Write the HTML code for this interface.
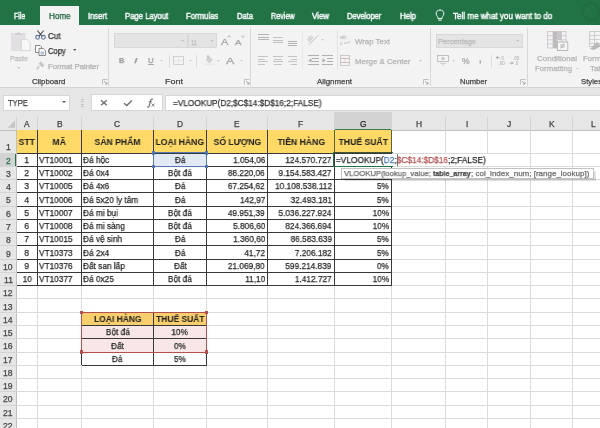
<!DOCTYPE html><html><head><meta charset="utf-8"><style>
*{margin:0;padding:0;box-sizing:border-box}
html,body{width:600px;height:428px;overflow:hidden;background:#fff;font-family:"Liberation Sans", sans-serif}
#root{position:relative;width:600px;height:428px;overflow:hidden}
.a{position:absolute}
.t{position:absolute;white-space:nowrap;line-height:1;will-change:transform;-webkit-text-stroke:0.25px currentColor}
</style></head><body><div id="root">
<div class="a" style="left:0;top:0;width:600px;height:25.3px;background:#217346"></div>
<svg class="a" style="left:575px;top:0" width="25" height="25"><circle cx="15.8" cy="11.7" r="8.5" fill="none" stroke="#1f6c42" stroke-width="2"/><path d="M12 8 L18 15 M12 8 V15" fill="none" stroke="#26764a" stroke-width="1.4"/></svg>
<div class="a" style="left:40.1px;top:5.8px;width:38.6px;height:20px;background:#f3f3f3"></div>
<div class="t" style="left:13.80px;top:13.00px;font-size:8.2px;color:#fff;font-weight:normal;letter-spacing:0px;transform:scaleX(0.8476);transform-origin:left;-webkit-text-stroke:0.4px #fff;">File</div>
<div class="t" style="left:48.50px;top:13.00px;font-size:8.2px;color:#1b603a;font-weight:normal;letter-spacing:0px;transform:scaleX(0.9829);transform-origin:left;">Home</div>
<div class="t" style="left:88.30px;top:13.00px;font-size:8.2px;color:#fff;font-weight:normal;letter-spacing:0px;transform:scaleX(0.9265);transform-origin:left;-webkit-text-stroke:0.4px #fff;">Insert</div>
<div class="t" style="left:125.00px;top:13.00px;font-size:8.2px;color:#fff;font-weight:normal;letter-spacing:0px;transform:scaleX(0.9403);transform-origin:left;-webkit-text-stroke:0.4px #fff;">Page Layout</div>
<div class="t" style="left:186.00px;top:13.00px;font-size:8.2px;color:#fff;font-weight:normal;letter-spacing:0px;transform:scaleX(0.9451);transform-origin:left;-webkit-text-stroke:0.4px #fff;">Formulas</div>
<div class="t" style="left:236.70px;top:13.00px;font-size:8.2px;color:#fff;font-weight:normal;letter-spacing:0px;transform:scaleX(0.9237);transform-origin:left;-webkit-text-stroke:0.4px #fff;">Data</div>
<div class="t" style="left:270.70px;top:13.00px;font-size:8.2px;color:#fff;font-weight:normal;letter-spacing:0px;transform:scaleX(0.8777);transform-origin:left;-webkit-text-stroke:0.4px #fff;">Review</div>
<div class="t" style="left:312.30px;top:13.00px;font-size:8.2px;color:#fff;font-weight:normal;letter-spacing:0px;transform:scaleX(0.9645);transform-origin:left;-webkit-text-stroke:0.4px #fff;">View</div>
<div class="t" style="left:347.30px;top:13.00px;font-size:8.2px;color:#fff;font-weight:normal;letter-spacing:0px;transform:scaleX(0.9203);transform-origin:left;-webkit-text-stroke:0.4px #fff;">Developer</div>
<div class="t" style="left:400.00px;top:13.00px;font-size:8.2px;color:#fff;font-weight:normal;letter-spacing:0px;transform:scaleX(0.9487);transform-origin:left;-webkit-text-stroke:0.4px #fff;">Help</div>
<div class="t" style="left:453.00px;top:13.00px;font-size:8.2px;color:#fff;font-weight:normal;letter-spacing:0px;transform:scaleX(0.9823);transform-origin:left;-webkit-text-stroke:0.4px #fff;">Tell me what you want to do</div>
<svg class="a" style="left:435px;top:8.5px" width="10" height="13"><path d="M5 1 C2.6 1 1.2 2.8 1.2 4.7 C1.2 6.3 2.4 7.1 2.9 8.4 L2.9 9.6 L7.1 9.6 L7.1 8.4 C7.6 7.1 8.8 6.3 8.8 4.7 C8.8 2.8 7.4 1 5 1 Z M3.4 11.2 L6.6 11.2" fill="none" stroke="#fff" stroke-width="1"/></svg>
<div class="a" style="left:0;top:25.3px;width:600px;height:62px;background:#f3f3f3"></div>
<div class="a" style="left:0;top:87.3px;width:600px;height:1px;background:#d4d4d4"></div>
<div class="a" style="left:0;top:88.3px;width:600px;height:24px;background:#e6e6e6"></div>
<div class="a" style="left:108.3px;top:28px;width:1px;height:58px;background:#d8d8d8"></div>
<div class="a" style="left:250.1px;top:28px;width:1px;height:58px;background:#d8d8d8"></div>
<div class="a" style="left:429.5px;top:28px;width:1px;height:58px;background:#d8d8d8"></div>
<div class="a" style="left:527.0px;top:28px;width:1px;height:58px;background:#d8d8d8"></div>
<div class="t" style="left:31.75px;top:78.00px;font-size:7.6px;color:#444;font-weight:normal;letter-spacing:0px;transform:scaleX(1.0252);transform-origin:left;">Clipboard</div>
<div class="t" style="left:164.50px;top:78.00px;font-size:7.6px;color:#444;font-weight:normal;letter-spacing:0px;transform:scaleX(1.1836);transform-origin:left;">Font</div>
<div class="t" style="left:317.00px;top:78.00px;font-size:7.6px;color:#444;font-weight:normal;letter-spacing:0px;transform:scaleX(1.0356);transform-origin:left;">Alignment</div>
<div class="t" style="left:460.00px;top:78.00px;font-size:7.6px;color:#444;font-weight:normal;letter-spacing:0px;">Number</div>
<div class="t" style="left:581.00px;top:78.00px;font-size:7.6px;color:#444;font-weight:normal;letter-spacing:0px;transform:scaleX(1.0147);transform-origin:left;">Styles</div>
<svg class="a" style="left:101.5px;top:79px" width="6" height="6"><path d="M0.5 5.5 V0.5 H5.5" fill="none" stroke="#b4b4b4" stroke-width="0.8"/><path d="M2 2 L5 5 M5 3 V5 H3" fill="none" stroke="#9a9a9a" stroke-width="0.8"/></svg>
<svg class="a" style="left:244.0px;top:79px" width="6" height="6"><path d="M0.5 5.5 V0.5 H5.5" fill="none" stroke="#b4b4b4" stroke-width="0.8"/><path d="M2 2 L5 5 M5 3 V5 H3" fill="none" stroke="#9a9a9a" stroke-width="0.8"/></svg>
<svg class="a" style="left:423.0px;top:79px" width="6" height="6"><path d="M0.5 5.5 V0.5 H5.5" fill="none" stroke="#b4b4b4" stroke-width="0.8"/><path d="M2 2 L5 5 M5 3 V5 H3" fill="none" stroke="#9a9a9a" stroke-width="0.8"/></svg>
<svg class="a" style="left:520.0px;top:79px" width="6" height="6"><path d="M0.5 5.5 V0.5 H5.5" fill="none" stroke="#b4b4b4" stroke-width="0.8"/><path d="M2 2 L5 5 M5 3 V5 H3" fill="none" stroke="#9a9a9a" stroke-width="0.8"/></svg>
<svg class="a" style="left:10px;top:30px" width="22" height="22"><rect x="1.5" y="3.5" width="13.5" height="17" fill="#e2e0e2" stroke="#dad6da" stroke-width="0.6"/><path d="M5 5 V3 H7 Q8.2 0.8 9.5 3 H11.5 V5 Z" fill="#d2ced2"/><path d="M11.3 9.6 H17.5 L20.3 12.4 V20.6 H11.3 Z" fill="#f7f7f7" stroke="#d2d2d2" stroke-width="0.8"/></svg>
<div class="t" style="left:10.30px;top:55.00px;font-size:7.6px;color:#bdbdbd;font-weight:normal;letter-spacing:0px;transform:scaleX(0.9210);transform-origin:left;">Paste</div>
<svg class="a" style="left:16.75px;top:66.5px" width="3.5" height="2"><path d="M0 0 H3.5 L1.75 2 Z" fill="#c4c4c4"/></svg>
<svg class="a" style="left:35px;top:30px" width="11" height="10"><path d="M2.3 0.5 L7.2 6.3 M8.7 0.5 L3.8 6.3" stroke="#4a4a4a" stroke-width="1.1" fill="none"/><circle cx="2.6" cy="7.3" r="1.9" fill="none" stroke="#60769e" stroke-width="1.1"/><circle cx="8.4" cy="7.3" r="1.9" fill="none" stroke="#60769e" stroke-width="1.1"/></svg>
<div class="t" style="left:47.90px;top:32.00px;font-size:8.4px;color:#333;font-weight:normal;letter-spacing:0px;transform:scaleX(0.9639);transform-origin:left;">Cut</div>
<svg class="a" style="left:35px;top:44.5px" width="11" height="11"><path d="M0.5 0.5 H5 L6.5 2 V7.5 H0.5 Z" fill="#fafafa" stroke="#707070" stroke-width="0.8"/><path d="M4 3.5 H8.3 L10.5 5.7 V10.5 H4 Z" fill="#fafafa" stroke="#707070" stroke-width="0.8"/><path d="M5.5 7.3 H9 M5.5 8.9 H9" stroke="#5b7fb5" stroke-width="0.7"/></svg>
<div class="t" style="left:48.10px;top:47.00px;font-size:8.4px;color:#333;font-weight:normal;letter-spacing:0px;transform:scaleX(0.9077);transform-origin:left;">Copy</div>
<svg class="a" style="left:72.85px;top:49.3px" width="3.5" height="2"><path d="M0 0 H3.5 L1.75 2 Z" fill="#555"/></svg>
<svg class="a" style="left:36px;top:61px" width="9" height="9"><path d="M4.8 0.5 L8.5 4.2 L6.2 6.5 L2.5 2.8 Z" fill="#c6c6c6"/><path d="M3.2 5.2 L0.8 8.3" stroke="#c6c6c6" stroke-width="1.6"/></svg>
<div class="t" style="left:47.90px;top:63.00px;font-size:7.6px;color:#b0b0b0;font-weight:normal;letter-spacing:0px;transform:scaleX(1.0147);transform-origin:left;">Format Painter</div>
<div class="a" style="left:114px;top:33px;width:73.5px;height:15px;background:#e4e4e4;border:1px solid #d8d8d8"></div>
<div class="a" style="left:187.5px;top:33px;width:29.5px;height:15px;background:#e4e4e4;border:1px solid #d8d8d8"></div>
<div class="t" style="left:191.00px;top:39.00px;font-size:8px;color:#b8b8b8;font-weight:normal;letter-spacing:0px;transform:scaleX(0.7225);transform-origin:left;">11</div>
<svg class="a" style="left:181.25px;top:39.5px" width="3.5" height="2"><path d="M0 0 H3.5 L1.75 2 Z" fill="#c4c4c4"/></svg>
<svg class="a" style="left:210.25px;top:39.5px" width="3.5" height="2"><path d="M0 0 H3.5 L1.75 2 Z" fill="#c4c4c4"/></svg>
<div class="t" style="left:220.60px;top:37.00px;font-size:9.5px;color:#a0a0a0;font-weight:normal;letter-spacing:0px;transform:scaleX(1.1678);transform-origin:left;">A</div>
<svg class="a" style="left:226.5px;top:34.5px" width="4" height="3"><path d="M0.3 2.6 L2 0.6 L3.7 2.6" fill="none" stroke="#a8a8a8" stroke-width="0.8"/></svg>
<div class="t" style="left:235.00px;top:39.00px;font-size:7.5px;color:#a0a0a0;font-weight:normal;letter-spacing:0px;transform:scaleX(1.2993);transform-origin:left;">A</div>
<svg class="a" style="left:240.5px;top:35px" width="4" height="3"><path d="M0.3 0.5 L2 2.5 L3.7 0.5" fill="none" stroke="#a8a8a8" stroke-width="0.8"/></svg>
<div class="t" style="left:118.75px;top:57.00px;font-size:8px;color:#989898;font-weight:bold;letter-spacing:0px;transform:scaleX(0.9087);transform-origin:left;">B</div>
<div class="t" style="left:134.00px;top:57.00px;font-size:8px;color:#989898;font-weight:normal;letter-spacing:0px;transform:scaleX(1.5748);transform-origin:left;font-style:italic;">I</div>
<div class="t" style="left:148.00px;top:57.00px;font-size:8px;color:#989898;font-weight:normal;letter-spacing:0px;transform:scaleX(0.9520);transform-origin:left;">U</div>
<div class="a" style="left:148px;top:64.2px;width:5.5px;height:0.8px;background:#a8a8a8"></div>
<svg class="a" style="left:160.0px;top:60.1px" width="3" height="1.8"><path d="M0 0 H3 L1.5 1.8 Z" fill="#c8c8c8"/></svg>
<svg class="a" style="left:188.5px;top:60.1px" width="3" height="1.8"><path d="M0 0 H3 L1.5 1.8 Z" fill="#c8c8c8"/></svg>
<svg class="a" style="left:217.25px;top:60.1px" width="3" height="1.8"><path d="M0 0 H3 L1.5 1.8 Z" fill="#c8c8c8"/></svg>
<svg class="a" style="left:239.5px;top:60.1px" width="3" height="1.8"><path d="M0 0 H3 L1.5 1.8 Z" fill="#c8c8c8"/></svg>
<div class="a" style="left:169.0px;top:55px;width:1px;height:13px;background:#dedede"></div>
<div class="a" style="left:196.4px;top:55px;width:1px;height:13px;background:#dedede"></div>
<svg class="a" style="left:172.5px;top:56px" width="11" height="9"><rect x="0.5" y="0.5" width="10" height="8" fill="none" stroke="#c8c8c8" stroke-width="0.8"/><path d="M0.5 4.5 H10.5 M5.5 0.5 V8.5" stroke="#d8d8d8" stroke-width="0.8" stroke-dasharray="1 1"/></svg>
<svg class="a" style="left:203.5px;top:55px" width="11" height="10"><path d="M1.5 4.5 L5 1 L9 5 L5.5 8.5 Z" fill="#d0d0d0"/><circle cx="4" cy="1.5" r="1.2" fill="#c0c0c0"/><rect x="0.5" y="8.5" width="10" height="1.5" fill="#e8e8e8"/></svg>
<div class="t" style="left:226.00px;top:56.00px;font-size:9.5px;color:#a0a0a0;font-weight:normal;letter-spacing:0px;transform:scaleX(1.3256);transform-origin:left;">A</div>
<div class="a" style="left:257.5px;top:34.25px;width:11.199999999999989px;height:0.9px;background:#b4b4b4"></div>
<div class="a" style="left:257.5px;top:36.55px;width:11.199999999999989px;height:0.9px;background:#b4b4b4"></div>
<div class="a" style="left:257.5px;top:38.75px;width:11.199999999999989px;height:0.9px;background:#b4b4b4"></div>
<div class="a" style="left:272.5px;top:37.3px;width:10.5px;height:1.0px;background:#c0c0c0"></div>
<div class="a" style="left:272.5px;top:39.5px;width:10.5px;height:1.0px;background:#c0c0c0"></div>
<div class="a" style="left:272.5px;top:41.7px;width:10.5px;height:1.0px;background:#c0c0c0"></div>
<div class="a" style="left:287.5px;top:40.75px;width:9.0px;height:0.9px;background:#b4b4b4"></div>
<div class="a" style="left:287.5px;top:42.849999999999994px;width:9.0px;height:0.9px;background:#b4b4b4"></div>
<div class="a" style="left:287.5px;top:45.05px;width:9.0px;height:0.9px;background:#b4b4b4"></div>
<div class="a" style="left:258px;top:56.0px;width:10px;height:1.0px;background:#c4c4c4"></div>
<div class="a" style="left:258px;top:58.5px;width:7px;height:1.0px;background:#c4c4c4"></div>
<div class="a" style="left:258px;top:61.0px;width:10px;height:1.0px;background:#c4c4c4"></div>
<div class="a" style="left:258px;top:63.5px;width:7px;height:1.0px;background:#c4c4c4"></div>
<div class="a" style="left:272.5px;top:56.0px;width:10.5px;height:1.0px;background:#c4c4c4"></div>
<div class="a" style="left:274px;top:58.5px;width:7.5px;height:1.0px;background:#c4c4c4"></div>
<div class="a" style="left:272.5px;top:61.0px;width:10.5px;height:1.0px;background:#c4c4c4"></div>
<div class="a" style="left:274px;top:63.5px;width:7.5px;height:1.0px;background:#c4c4c4"></div>
<div class="a" style="left:287.5px;top:56.0px;width:9.5px;height:1.0px;background:#c4c4c4"></div>
<div class="a" style="left:290.5px;top:58.5px;width:6.5px;height:1.0px;background:#c4c4c4"></div>
<div class="a" style="left:287.5px;top:61.0px;width:9.5px;height:1.0px;background:#c4c4c4"></div>
<div class="a" style="left:290.5px;top:63.5px;width:6.5px;height:1.0px;background:#c4c4c4"></div>
<div class="a" style="left:307.7px;top:55.2px;width:11.300000000000011px;height:1.0px;background:#b0b0b0"></div>
<div class="a" style="left:312.2px;top:58.1px;width:6.800000000000011px;height:1.0px;background:#b0b0b0"></div>
<div class="a" style="left:312.2px;top:61.0px;width:6.800000000000011px;height:1.0px;background:#b0b0b0"></div>
<div class="a" style="left:307.7px;top:63.8px;width:11.300000000000011px;height:1.0px;background:#b0b0b0"></div>
<div class="a" style="left:322px;top:55.2px;width:11.300000000000011px;height:1.0px;background:#b0b0b0"></div>
<div class="a" style="left:326.5px;top:58.1px;width:6.800000000000011px;height:1.0px;background:#b0b0b0"></div>
<div class="a" style="left:326.5px;top:61.0px;width:6.800000000000011px;height:1.0px;background:#b0b0b0"></div>
<div class="a" style="left:322px;top:63.8px;width:11.300000000000011px;height:1.0px;background:#b0b0b0"></div>
<svg class="a" style="left:307.5px;top:57.5px" width="4" height="5"><path d="M0.3 2.5 L3.5 0.5 V4.5 Z" fill="#a8a8a8"/></svg>
<svg class="a" style="left:322px;top:57.5px" width="4" height="5"><path d="M3.7 2.5 L0.5 0.5 V4.5 Z" fill="#a8a8a8"/></svg>
<svg class="a" style="left:306px;top:33px" width="15" height="13"><text x="0" y="0" font-size="6" fill="#b0b0b0" font-family="Liberation Sans" transform="translate(3,9) rotate(-45)">ab</text><path d="M3 11.5 L12 2.5" stroke="#b8b8b8" stroke-width="0.9"/></svg>
<svg class="a" style="left:321.2px;top:39.1px" width="3" height="1.8"><path d="M0 0 H3 L1.5 1.8 Z" fill="#c4c4c4"/></svg>
<div class="a" style="left:301.5px;top:33px;width:1px;height:36px;background:#e8e8e8"></div>
<div class="a" style="left:337px;top:30px;width:1px;height:40px;background:#e2e2e2"></div>
<svg class="a" style="left:340px;top:34px" width="11" height="12"><text x="0" y="5" font-size="6" fill="#b0b0b0" font-family="Liberation Sans">ab</text><text x="0" y="10.5" font-size="5.5" fill="#b0b0b0" font-family="Liberation Sans">c</text><path d="M4 9 H7.5 Q9.5 9 9.5 7" stroke="#b0b0b0" fill="none" stroke-width="0.8"/></svg>
<div class="t" style="left:355.00px;top:38.00px;font-size:7.8px;color:#b3b3b3;font-weight:normal;letter-spacing:0px;transform:scaleX(1.0050);transform-origin:left;">Wrap Text</div>
<svg class="a" style="left:340px;top:55px" width="10" height="11"><rect x="0.5" y="0.5" width="9" height="10" fill="none" stroke="#c0c0c0" stroke-width="0.8"/><path d="M0.5 3.5 H9.5 M0.5 7.5 H9.5" stroke="#d0a8a8" stroke-width="0.8"/><path d="M5 3.5 V7.5" stroke="#d0d0d0" stroke-width="0.8"/></svg>
<div class="t" style="left:355.00px;top:58.00px;font-size:7.8px;color:#b3b3b3;font-weight:normal;letter-spacing:0px;transform:scaleX(1.0080);transform-origin:left;">Merge &amp; Center</div>
<svg class="a" style="left:418.5px;top:60.1px" width="3" height="1.8"><path d="M0 0 H3 L1.5 1.8 Z" fill="#c4c4c4"/></svg>
<div class="a" style="left:436px;top:34px;width:86.5px;height:14px;background:#e4e4e4;border:1px solid #d8d8d8"></div>
<div class="t" style="left:438.00px;top:38.00px;font-size:7.8px;color:#b8b8b8;font-weight:normal;letter-spacing:0px;transform:scaleX(0.9525);transform-origin:left;">Percentage</div>
<svg class="a" style="left:515.75px;top:39.5px" width="3.5" height="2"><path d="M0 0 H3.5 L1.75 2 Z" fill="#c4c4c4"/></svg>
<svg class="a" style="left:437px;top:54.5px" width="12" height="11"><rect x="0.5" y="0.5" width="11" height="6" fill="none" stroke="#b4b4b4" stroke-width="0.8"/><circle cx="6" cy="3.5" r="1.5" fill="#c4c4c4"/><path d="M3 8.5 H9 M4.5 10 H7.5" stroke="#c8c8c8" stroke-width="0.8"/></svg>
<svg class="a" style="left:451.5px;top:60.1px" width="3" height="1.8"><path d="M0 0 H3 L1.5 1.8 Z" fill="#c8c8c8"/></svg>
<div class="t" style="left:462.22px;top:57.00px;font-size:8.5px;color:#a8a8a8;font-weight:normal;letter-spacing:0px;">%</div>
<div class="t" style="left:478.75px;top:55.00px;font-size:9px;color:#a8a8a8;font-weight:bold;letter-spacing:0px;">,</div>
<div class="a" style="left:490.5px;top:55px;width:1px;height:13px;background:#dedede"></div>
<svg class="a" style="left:495px;top:55px" width="12" height="11"><g fill="#a8a8a8" font-family="Liberation Sans" font-size="4.6"><text x="5" y="4.5">.0</text><path d="M0.5 2.6 L3 1 V4.2 Z"/><rect x="2" y="2.3" width="3" height="0.7"/><text x="3.5" y="10">.00</text></g></svg>
<svg class="a" style="left:509px;top:55px" width="12" height="11"><g fill="#a8a8a8" font-family="Liberation Sans" font-size="4.6"><text x="4" y="4.5">.00</text><text x="5.5" y="10">.0</text><path d="M4.8 8.1 L2.3 6.5 V9.7 Z"/><rect x="0.5" y="7.8" width="2" height="0.7"/></g></svg>
<svg class="a" style="left:547px;top:31px" width="22" height="20"><rect x="6" y="0.5" width="4" height="16.5" fill="#b9b9b9"/><rect x="10" y="0.5" width="4.5" height="8.5" fill="#c8c8c8"/><g fill="none" stroke="#c9c3c9" stroke-width="0.8"><rect x="0.5" y="0.5" width="18.5" height="16.5"/><path d="M0.5 4.6 H19 M0.5 8.8 H19 M0.5 12.9 H19 M6 0.5 V17 M10 0.5 V17 M14.5 0.5 V17"/></g><rect x="10.3" y="11" width="10.5" height="8.5" fill="#f7f7f7" stroke="#a9a9a9" stroke-width="0.8"/><path d="M13 14 H18 M13 16 H18 M14 17.5 L17 12.5" stroke="#a0a0a0" stroke-width="0.7"/></svg>
<div class="t" style="left:537.00px;top:55.00px;font-size:7.8px;color:#b3b3b3;font-weight:normal;letter-spacing:0px;transform:scaleX(1.0249);transform-origin:left;">Conditional</div>
<div class="t" style="left:535.00px;top:65.00px;font-size:7.8px;color:#b3b3b3;font-weight:normal;letter-spacing:0px;transform:scaleX(0.9925);transform-origin:left;">Formatting</div>
<svg class="a" style="left:576.0px;top:67.6px" width="3" height="1.8"><path d="M0 0 H3 L1.5 1.8 Z" fill="#c4c4c4"/></svg>
<svg class="a" style="left:589px;top:31px" width="14" height="20"><g fill="none" stroke="#c4c4c4" stroke-width="0.8"><rect x="0.5" y="0.5" width="15" height="15"/><path d="M0.5 4.5 H15.5 M0.5 8.5 H15.5 M0.5 12.5 H15.5 M5.5 0.5 V15.5"/></g><path d="M1 18 L8 11 L12 15 L5 19 Z" fill="#b8b8b8"/></svg>
<div class="t" style="left:583.00px;top:55.00px;font-size:7.8px;color:#b3b3b3;font-weight:normal;letter-spacing:0px;">Form</div>
<div class="t" style="left:590.00px;top:65.00px;font-size:7.8px;color:#b3b3b3;font-weight:normal;letter-spacing:0px;">Tab</div>
<div class="a" style="left:3.3px;top:95px;width:66.7px;height:16px;background:#fff;border:1px solid #d6d6d6"></div>
<div class="t" style="left:8.00px;top:100.00px;font-size:8.2px;color:#3a3a3a;font-weight:normal;letter-spacing:0px;transform:scaleX(0.9198);transform-origin:left;">TYPE</div>
<svg class="a" style="left:61.5px;top:100.85px" width="4" height="2.3"><path d="M0 0 H4 L2.0 2.3 Z" fill="#666"/></svg>
<div class="a" style="left:80.5px;top:98.5px;width:3.5px;height:1px;background:#c4c4c4"></div>
<div class="a" style="left:80.5px;top:101px;width:3.5px;height:1px;background:#c4c4c4"></div>
<div class="a" style="left:80.5px;top:103.5px;width:3.5px;height:1px;background:#c4c4c4"></div>
<div class="a" style="left:80.5px;top:106px;width:3.5px;height:1px;background:#c4c4c4"></div>
<div class="a" style="left:90.8px;top:94.3px;width:72.5px;height:17px;background:#fff;border:1px solid #d6d6d6"></div>
<svg class="a" style="left:99.5px;top:99px" width="8" height="8"><path d="M1 1.2 L6.8 6.2 M6.8 1.2 L1 6.2" stroke="#6a6a6a" stroke-width="1.2"/></svg>
<svg class="a" style="left:123px;top:99px" width="10" height="8"><path d="M1 4.2 L3.8 6.5 L8.8 1.5" stroke="#6a6a6a" stroke-width="1.3" fill="none"/></svg>
<svg class="a" style="left:146px;top:98px" width="10" height="10"><path d="M7 1.3 Q5.5 0.5 4.8 2 L3 8.5 Q2.5 9.5 1.2 9" stroke="#6a6a6a" stroke-width="1.1" fill="none"/><path d="M2.8 3.8 H6" stroke="#6a6a6a" stroke-width="0.9"/><path d="M5.6 5.5 L8.6 8.6 M8.6 5.5 L5.6 8.6" stroke="#7a7a7a" stroke-width="0.9"/></svg>
<div class="a" style="left:165px;top:94.5px;width:436px;height:16.8px;background:#fff;border:1px solid #d6d6d6"></div>
<div class="t" style="left:173.40px;top:99.00px;font-size:8.6px;color:#333;font-weight:normal;letter-spacing:0px;transform:scaleX(0.9579);transform-origin:left;">=VLOOKUP(D2;$C$14:$D$16;2;FALSE)</div>
<div class="a" style="left:0;top:112px;width:600px;height:18px;background:#e6e6e6"></div>
<div class="a" style="left:0;top:130px;width:16.7px;height:298px;background:#e6e6e6"></div>
<svg class="a" style="left:7px;top:119px" width="9" height="10"><path d="M8 1.5 V8.8 H0.8 Z" fill="#c4c4c4"/></svg>
<div class="a" style="left:334.2px;top:112px;width:57.5px;height:18px;background:#d3d3d3"></div>
<div class="a" style="left:334.2px;top:128.8px;width:57.5px;height:1.3px;background:#3d7a4f"></div>
<div class="a" style="left:0;top:153.0px;width:16.7px;height:13.27px;background:#d3d3d3"></div>
<div class="a" style="left:15.3px;top:153.0px;width:1.6px;height:13.27px;background:#217346"></div>
<div class="a" style="left:16.2px;top:117px;width:1px;height:13px;background:#d2d2d2"></div>
<div class="a" style="left:37.0px;top:117px;width:1px;height:13px;background:#d2d2d2"></div>
<div class="a" style="left:81.2px;top:117px;width:1px;height:13px;background:#d2d2d2"></div>
<div class="a" style="left:152.8px;top:117px;width:1px;height:13px;background:#d2d2d2"></div>
<div class="a" style="left:206.2px;top:117px;width:1px;height:13px;background:#d2d2d2"></div>
<div class="a" style="left:267.0px;top:117px;width:1px;height:13px;background:#d2d2d2"></div>
<div class="a" style="left:333.7px;top:117px;width:1px;height:13px;background:#d2d2d2"></div>
<div class="a" style="left:391.2px;top:117px;width:1px;height:13px;background:#d2d2d2"></div>
<div class="a" style="left:445.4px;top:117px;width:1px;height:13px;background:#d2d2d2"></div>
<div class="a" style="left:487.0px;top:117px;width:1px;height:13px;background:#d2d2d2"></div>
<div class="a" style="left:530.2px;top:117px;width:1px;height:13px;background:#d2d2d2"></div>
<div class="a" style="left:572.0px;top:117px;width:1px;height:13px;background:#d2d2d2"></div>
<div class="a" style="left:0;top:129.5px;width:600px;height:0.8px;background:#c0c0c0"></div>
<div class="a" style="left:16.2px;top:130px;width:0.8px;height:298px;background:#c0c0c0"></div>
<div class="t" style="left:24.30px;top:120.00px;font-size:8.4px;color:#444;font-weight:normal;letter-spacing:0px;">A</div>
<div class="t" style="left:56.80px;top:120.00px;font-size:8.4px;color:#444;font-weight:normal;letter-spacing:0px;">B</div>
<div class="t" style="left:114.47px;top:120.00px;font-size:8.4px;color:#444;font-weight:normal;letter-spacing:0px;">C</div>
<div class="t" style="left:176.97px;top:120.00px;font-size:8.4px;color:#444;font-weight:normal;letter-spacing:0px;">D</div>
<div class="t" style="left:234.30px;top:120.00px;font-size:8.4px;color:#444;font-weight:normal;letter-spacing:0px;">E</div>
<div class="t" style="left:298.28px;top:120.00px;font-size:8.4px;color:#444;font-weight:normal;letter-spacing:0px;">F</div>
<div class="t" style="left:359.68px;top:120.00px;font-size:8.4px;color:#262626;font-weight:normal;letter-spacing:0px;">G</div>
<div class="t" style="left:415.77px;top:120.00px;font-size:8.4px;color:#444;font-weight:normal;letter-spacing:0px;">H</div>
<div class="t" style="left:465.53px;top:120.00px;font-size:8.4px;color:#444;font-weight:normal;letter-spacing:0px;">I</div>
<div class="t" style="left:507.00px;top:120.00px;font-size:8.4px;color:#444;font-weight:normal;letter-spacing:0px;">J</div>
<div class="t" style="left:548.80px;top:120.00px;font-size:8.4px;color:#444;font-weight:normal;letter-spacing:0px;">K</div>
<div class="t" style="left:591.41px;top:120.00px;font-size:8.4px;color:#444;font-weight:normal;letter-spacing:0px;">L</div>
<div class="t" style="left:5.81px;top:143.00px;font-size:8.6px;color:#444;font-weight:normal;letter-spacing:0px;">1</div>
<div class="a" style="left:0;top:152.5px;width:16.5px;height:0.8px;background:#d4d4d4"></div>
<div class="t" style="left:5.81px;top:157.00px;font-size:8.6px;color:#217346;font-weight:normal;letter-spacing:0px;">2</div>
<div class="a" style="left:0;top:165.77px;width:16.5px;height:0.8px;background:#d4d4d4"></div>
<div class="t" style="left:5.81px;top:170.00px;font-size:8.6px;color:#444;font-weight:normal;letter-spacing:0px;">3</div>
<div class="a" style="left:0;top:179.04px;width:16.5px;height:0.8px;background:#d4d4d4"></div>
<div class="t" style="left:5.81px;top:183.00px;font-size:8.6px;color:#444;font-weight:normal;letter-spacing:0px;">4</div>
<div class="a" style="left:0;top:192.31px;width:16.5px;height:0.8px;background:#d4d4d4"></div>
<div class="t" style="left:5.81px;top:196.00px;font-size:8.6px;color:#444;font-weight:normal;letter-spacing:0px;">5</div>
<div class="a" style="left:0;top:205.57999999999998px;width:16.5px;height:0.8px;background:#d4d4d4"></div>
<div class="t" style="left:5.81px;top:210.00px;font-size:8.6px;color:#444;font-weight:normal;letter-spacing:0px;">6</div>
<div class="a" style="left:0;top:218.85px;width:16.5px;height:0.8px;background:#d4d4d4"></div>
<div class="t" style="left:5.81px;top:223.00px;font-size:8.6px;color:#444;font-weight:normal;letter-spacing:0px;">7</div>
<div class="a" style="left:0;top:232.12px;width:16.5px;height:0.8px;background:#d4d4d4"></div>
<div class="t" style="left:5.81px;top:236.00px;font-size:8.6px;color:#444;font-weight:normal;letter-spacing:0px;">8</div>
<div class="a" style="left:0;top:245.39px;width:16.5px;height:0.8px;background:#d4d4d4"></div>
<div class="t" style="left:5.81px;top:250.00px;font-size:8.6px;color:#444;font-weight:normal;letter-spacing:0px;">9</div>
<div class="a" style="left:0;top:258.65999999999997px;width:16.5px;height:0.8px;background:#d4d4d4"></div>
<div class="t" style="left:3.42px;top:263.00px;font-size:8.6px;color:#444;font-weight:normal;letter-spacing:0px;">10</div>
<div class="a" style="left:0;top:271.93px;width:16.5px;height:0.8px;background:#d4d4d4"></div>
<div class="t" style="left:3.74px;top:276.00px;font-size:8.6px;color:#444;font-weight:normal;letter-spacing:0px;">11</div>
<div class="a" style="left:0;top:285.2px;width:16.5px;height:0.8px;background:#d4d4d4"></div>
<div class="t" style="left:3.42px;top:289.00px;font-size:8.6px;color:#444;font-weight:normal;letter-spacing:0px;">12</div>
<div class="a" style="left:0;top:298.47px;width:16.5px;height:0.8px;background:#d4d4d4"></div>
<div class="t" style="left:3.42px;top:303.00px;font-size:8.6px;color:#444;font-weight:normal;letter-spacing:0px;">13</div>
<div class="a" style="left:0;top:311.74px;width:16.5px;height:0.8px;background:#d4d4d4"></div>
<div class="t" style="left:3.42px;top:316.00px;font-size:8.6px;color:#444;font-weight:normal;letter-spacing:0px;">14</div>
<div class="a" style="left:0;top:325.01px;width:16.5px;height:0.8px;background:#d4d4d4"></div>
<div class="t" style="left:3.42px;top:329.00px;font-size:8.6px;color:#444;font-weight:normal;letter-spacing:0px;">15</div>
<div class="a" style="left:0;top:338.28px;width:16.5px;height:0.8px;background:#d4d4d4"></div>
<div class="t" style="left:3.42px;top:342.00px;font-size:8.6px;color:#444;font-weight:normal;letter-spacing:0px;">16</div>
<div class="a" style="left:0;top:351.54999999999995px;width:16.5px;height:0.8px;background:#d4d4d4"></div>
<div class="t" style="left:3.42px;top:356.00px;font-size:8.6px;color:#444;font-weight:normal;letter-spacing:0px;">17</div>
<div class="a" style="left:0;top:364.82px;width:16.5px;height:0.8px;background:#d4d4d4"></div>
<div class="t" style="left:3.42px;top:369.00px;font-size:8.6px;color:#444;font-weight:normal;letter-spacing:0px;">18</div>
<div class="a" style="left:0;top:378.09000000000003px;width:16.5px;height:0.8px;background:#d4d4d4"></div>
<div class="t" style="left:3.42px;top:382.00px;font-size:8.6px;color:#444;font-weight:normal;letter-spacing:0px;">19</div>
<div class="a" style="left:0;top:391.36px;width:16.5px;height:0.8px;background:#d4d4d4"></div>
<div class="t" style="left:3.42px;top:395.00px;font-size:8.6px;color:#444;font-weight:normal;letter-spacing:0px;">20</div>
<div class="a" style="left:0;top:404.63px;width:16.5px;height:0.8px;background:#d4d4d4"></div>
<div class="t" style="left:3.42px;top:409.00px;font-size:8.6px;color:#444;font-weight:normal;letter-spacing:0px;">21</div>
<div class="a" style="left:0;top:417.9px;width:16.5px;height:0.8px;background:#d4d4d4"></div>
<div class="t" style="left:3.42px;top:422.00px;font-size:8.6px;color:#444;font-weight:normal;letter-spacing:0px;">22</div>
<div class="a" style="left:0;top:431.17px;width:16.5px;height:0.8px;background:#d4d4d4"></div>
<div class="t" style="left:3.42px;top:435.00px;font-size:8.6px;color:#444;font-weight:normal;letter-spacing:0px;">23</div>
<div class="a" style="left:0;top:444.44px;width:16.5px;height:0.8px;background:#d4d4d4"></div>
<div class="a" style="left:37.0px;top:130px;width:1px;height:298px;background:#dadada"></div>
<div class="a" style="left:81.2px;top:130px;width:1px;height:298px;background:#dadada"></div>
<div class="a" style="left:152.8px;top:130px;width:1px;height:298px;background:#dadada"></div>
<div class="a" style="left:206.2px;top:130px;width:1px;height:298px;background:#dadada"></div>
<div class="a" style="left:267.0px;top:130px;width:1px;height:298px;background:#dadada"></div>
<div class="a" style="left:333.7px;top:130px;width:1px;height:298px;background:#dadada"></div>
<div class="a" style="left:391.2px;top:130px;width:1px;height:298px;background:#dadada"></div>
<div class="a" style="left:445.4px;top:130px;width:1px;height:298px;background:#dadada"></div>
<div class="a" style="left:487.0px;top:130px;width:1px;height:298px;background:#dadada"></div>
<div class="a" style="left:530.2px;top:130px;width:1px;height:298px;background:#dadada"></div>
<div class="a" style="left:572.0px;top:130px;width:1px;height:298px;background:#dadada"></div>
<div class="a" style="left:16.7px;top:152.5px;width:590px;height:1px;background:#dadada"></div>
<div class="a" style="left:16.7px;top:165.77px;width:590px;height:1px;background:#dadada"></div>
<div class="a" style="left:16.7px;top:179.04px;width:590px;height:1px;background:#dadada"></div>
<div class="a" style="left:16.7px;top:192.31px;width:590px;height:1px;background:#dadada"></div>
<div class="a" style="left:16.7px;top:205.57999999999998px;width:590px;height:1px;background:#dadada"></div>
<div class="a" style="left:16.7px;top:218.85px;width:590px;height:1px;background:#dadada"></div>
<div class="a" style="left:16.7px;top:232.12px;width:590px;height:1px;background:#dadada"></div>
<div class="a" style="left:16.7px;top:245.39px;width:590px;height:1px;background:#dadada"></div>
<div class="a" style="left:16.7px;top:258.65999999999997px;width:590px;height:1px;background:#dadada"></div>
<div class="a" style="left:16.7px;top:271.93px;width:590px;height:1px;background:#dadada"></div>
<div class="a" style="left:16.7px;top:285.2px;width:590px;height:1px;background:#dadada"></div>
<div class="a" style="left:16.7px;top:298.47px;width:590px;height:1px;background:#dadada"></div>
<div class="a" style="left:16.7px;top:311.74px;width:590px;height:1px;background:#dadada"></div>
<div class="a" style="left:16.7px;top:325.01px;width:590px;height:1px;background:#dadada"></div>
<div class="a" style="left:16.7px;top:338.28px;width:590px;height:1px;background:#dadada"></div>
<div class="a" style="left:16.7px;top:351.54999999999995px;width:590px;height:1px;background:#dadada"></div>
<div class="a" style="left:16.7px;top:364.82px;width:590px;height:1px;background:#dadada"></div>
<div class="a" style="left:16.7px;top:378.09000000000003px;width:590px;height:1px;background:#dadada"></div>
<div class="a" style="left:16.7px;top:391.36px;width:590px;height:1px;background:#dadada"></div>
<div class="a" style="left:16.7px;top:404.63px;width:590px;height:1px;background:#dadada"></div>
<div class="a" style="left:16.7px;top:417.9px;width:590px;height:1px;background:#dadada"></div>
<div class="a" style="left:16.7px;top:431.17px;width:590px;height:1px;background:#dadada"></div>
<div class="a" style="left:16.7px;top:444.44px;width:590px;height:1px;background:#dadada"></div>
<div class="a" style="left:16.7px;top:130px;width:375.0px;height:23px;background:#ffd966"></div>
<div class="a" style="left:81.7px;top:312.24px;width:124.99999999999999px;height:13.27px;background:#f8cf6c"></div>
<div class="a" style="left:81.7px;top:325.51px;width:124.99999999999999px;height:26.54px;background:#f9e7e7"></div>
<div class="a" style="left:153.3px;top:153.0px;width:53.39999999999998px;height:13.27px;background:#e3e9f4"></div>
<div class="a" style="left:37.0px;top:130px;width:1px;height:155.7px;background:#383838"></div>
<div class="a" style="left:81.2px;top:130px;width:1px;height:155.7px;background:#383838"></div>
<div class="a" style="left:152.8px;top:130px;width:1px;height:155.7px;background:#383838"></div>
<div class="a" style="left:206.2px;top:130px;width:1px;height:155.7px;background:#383838"></div>
<div class="a" style="left:267.0px;top:130px;width:1px;height:155.7px;background:#383838"></div>
<div class="a" style="left:333.7px;top:130px;width:1px;height:23.0px;background:#56663a"></div>
<div class="a" style="left:333.7px;top:153.0px;width:1px;height:132.7px;background:#383838"></div>
<div class="a" style="left:391.2px;top:130px;width:1px;height:23.0px;background:#56663a"></div>
<div class="a" style="left:391.2px;top:153.0px;width:1px;height:132.7px;background:#383838"></div>
<div class="a" style="left:16.7px;top:152.5px;width:375.0px;height:1px;background:#383838"></div>
<div class="a" style="left:16.7px;top:165.77px;width:375.0px;height:1px;background:#383838"></div>
<div class="a" style="left:16.7px;top:179.04px;width:375.0px;height:1px;background:#383838"></div>
<div class="a" style="left:16.7px;top:192.31px;width:375.0px;height:1px;background:#383838"></div>
<div class="a" style="left:16.7px;top:205.57999999999998px;width:375.0px;height:1px;background:#383838"></div>
<div class="a" style="left:16.7px;top:218.85px;width:375.0px;height:1px;background:#383838"></div>
<div class="a" style="left:16.7px;top:232.12px;width:375.0px;height:1px;background:#383838"></div>
<div class="a" style="left:16.7px;top:245.39px;width:375.0px;height:1px;background:#383838"></div>
<div class="a" style="left:16.7px;top:258.65999999999997px;width:375.0px;height:1px;background:#383838"></div>
<div class="a" style="left:16.7px;top:271.93px;width:375.0px;height:1px;background:#383838"></div>
<div class="a" style="left:16.7px;top:285.2px;width:375.0px;height:1px;background:#383838"></div>
<div class="a" style="left:81.2px;top:312.24px;width:1px;height:53.079999999999984px;background:#383838"></div>
<div class="a" style="left:152.8px;top:312.24px;width:1px;height:53.079999999999984px;background:#383838"></div>
<div class="a" style="left:206.2px;top:312.24px;width:1px;height:53.079999999999984px;background:#383838"></div>
<div class="a" style="left:81.7px;top:311.74px;width:124.99999999999999px;height:1px;background:#383838"></div>
<div class="a" style="left:81.7px;top:325.01px;width:124.99999999999999px;height:1px;background:#383838"></div>
<div class="a" style="left:81.7px;top:338.28px;width:124.99999999999999px;height:1px;background:#383838"></div>
<div class="a" style="left:81.7px;top:351.54999999999995px;width:124.99999999999999px;height:1px;background:#383838"></div>
<div class="a" style="left:81.7px;top:364.82px;width:124.99999999999999px;height:1px;background:#383838"></div>
<div class="t" style="left:18.41px;top:138.00px;font-size:9.2px;color:#262626;font-weight:bold;letter-spacing:0px;transform:scaleX(0.9400);transform-origin:center;-webkit-text-stroke:0.05px currentColor;">STT</div>
<div class="t" style="left:52.45px;top:138.00px;font-size:9.2px;color:#262626;font-weight:bold;letter-spacing:0px;transform:scaleX(0.9400);transform-origin:center;-webkit-text-stroke:0.05px currentColor;">MÃ</div>
<div class="t" style="left:92.97px;top:138.00px;font-size:9.2px;color:#262626;font-weight:bold;letter-spacing:0px;transform:scaleX(0.9400);transform-origin:center;-webkit-text-stroke:0.05px currentColor;">SẢN PHẨM</div>
<div class="t" style="left:154.19px;top:138.00px;font-size:9.2px;color:#262626;font-weight:bold;letter-spacing:0px;transform:scaleX(0.9400);transform-origin:center;-webkit-text-stroke:0.05px currentColor;">LOẠI HÀNG</div>
<div class="t" style="left:211.73px;top:138.00px;font-size:9.2px;color:#262626;font-weight:bold;letter-spacing:0px;transform:scaleX(0.9400);transform-origin:center;-webkit-text-stroke:0.05px currentColor;">SỐ LƯỢNG</div>
<div class="t" style="left:275.55px;top:138.00px;font-size:9.2px;color:#262626;font-weight:bold;letter-spacing:0px;transform:scaleX(0.9400);transform-origin:center;-webkit-text-stroke:0.05px currentColor;">TIỀN HÀNG</div>
<div class="t" style="left:336.63px;top:138.00px;font-size:9.2px;color:#262626;font-weight:bold;letter-spacing:0px;transform:scaleX(0.9400);transform-origin:center;-webkit-text-stroke:0.05px currentColor;">THUẾ SUẤT</div>
<div class="t" style="left:24.43px;top:155.00px;font-size:9.6px;color:#262626;font-weight:normal;letter-spacing:0px;transform:scaleX(0.8625);transform-origin:center;">1</div>
<div class="t" style="left:39.20px;top:155.00px;font-size:9.6px;color:#262626;font-weight:normal;letter-spacing:0px;transform:scaleX(0.8625);transform-origin:left;">VT10001</div>
<div class="t" style="left:83.40px;top:155.00px;font-size:9.6px;color:#262626;font-weight:normal;letter-spacing:0px;transform:scaleX(0.8625);transform-origin:left;">Đá hộc</div>
<div class="t" style="left:173.86px;top:155.00px;font-size:9.6px;color:#262626;font-weight:normal;letter-spacing:0px;transform:scaleX(0.8625);transform-origin:center;">Đá</div>
<div class="t" style="left:227.73px;top:155.00px;font-size:9.6px;color:#262626;font-weight:normal;letter-spacing:0px;transform:scaleX(0.8625);transform-origin:right;">1.054,06</div>
<div class="t" style="left:278.41px;top:155.00px;font-size:9.6px;color:#262626;font-weight:normal;letter-spacing:0px;transform:scaleX(0.8625);transform-origin:right;">124.570.727</div>
<div class="t" style="left:24.43px;top:168.00px;font-size:9.6px;color:#262626;font-weight:normal;letter-spacing:0px;transform:scaleX(0.8625);transform-origin:center;">2</div>
<div class="t" style="left:39.20px;top:168.00px;font-size:9.6px;color:#262626;font-weight:normal;letter-spacing:0px;transform:scaleX(0.8625);transform-origin:left;">VT10002</div>
<div class="t" style="left:83.40px;top:168.00px;font-size:9.6px;color:#262626;font-weight:normal;letter-spacing:0px;transform:scaleX(0.8625);transform-origin:left;">Đá 0x4</div>
<div class="t" style="left:166.12px;top:168.00px;font-size:9.6px;color:#262626;font-weight:normal;letter-spacing:0px;transform:scaleX(0.8625);transform-origin:center;">Bột đá</div>
<div class="t" style="left:222.39px;top:168.00px;font-size:9.6px;color:#262626;font-weight:normal;letter-spacing:0px;transform:scaleX(0.8625);transform-origin:right;">88.220,06</div>
<div class="t" style="left:270.41px;top:168.00px;font-size:9.6px;color:#262626;font-weight:normal;letter-spacing:0px;transform:scaleX(0.8625);transform-origin:right;">9.154.583.427</div>
<div class="t" style="left:24.43px;top:181.00px;font-size:9.6px;color:#262626;font-weight:normal;letter-spacing:0px;transform:scaleX(0.8625);transform-origin:center;">3</div>
<div class="t" style="left:39.20px;top:181.00px;font-size:9.6px;color:#262626;font-weight:normal;letter-spacing:0px;transform:scaleX(0.8625);transform-origin:left;">VT10005</div>
<div class="t" style="left:83.40px;top:181.00px;font-size:9.6px;color:#262626;font-weight:normal;letter-spacing:0px;transform:scaleX(0.8625);transform-origin:left;">Đá 4x6</div>
<div class="t" style="left:173.86px;top:181.00px;font-size:9.6px;color:#262626;font-weight:normal;letter-spacing:0px;transform:scaleX(0.8625);transform-origin:center;">Đá</div>
<div class="t" style="left:222.39px;top:181.00px;font-size:9.6px;color:#262626;font-weight:normal;letter-spacing:0px;transform:scaleX(0.8625);transform-origin:right;">67.254,62</div>
<div class="t" style="left:265.78px;top:181.00px;font-size:9.6px;color:#262626;font-weight:normal;letter-spacing:0px;transform:scaleX(0.8625);transform-origin:right;">10.108.538.112</div>
<div class="t" style="left:375.43px;top:181.00px;font-size:9.6px;color:#262626;font-weight:normal;letter-spacing:0px;transform:scaleX(0.8625);transform-origin:right;">5%</div>
<div class="t" style="left:24.43px;top:195.00px;font-size:9.6px;color:#262626;font-weight:normal;letter-spacing:0px;transform:scaleX(0.8625);transform-origin:center;">4</div>
<div class="t" style="left:39.20px;top:195.00px;font-size:9.6px;color:#262626;font-weight:normal;letter-spacing:0px;transform:scaleX(0.8625);transform-origin:left;">VT10006</div>
<div class="t" style="left:83.40px;top:195.00px;font-size:9.6px;color:#262626;font-weight:normal;letter-spacing:0px;transform:scaleX(0.8625);transform-origin:left;">Đá 5x20 ly tâm</div>
<div class="t" style="left:173.86px;top:195.00px;font-size:9.6px;color:#262626;font-weight:normal;letter-spacing:0px;transform:scaleX(0.8625);transform-origin:center;">Đá</div>
<div class="t" style="left:235.74px;top:195.00px;font-size:9.6px;color:#262626;font-weight:normal;letter-spacing:0px;transform:scaleX(0.8625);transform-origin:right;">142,97</div>
<div class="t" style="left:283.75px;top:195.00px;font-size:9.6px;color:#262626;font-weight:normal;letter-spacing:0px;transform:scaleX(0.8625);transform-origin:right;">32.493.181</div>
<div class="t" style="left:375.43px;top:195.00px;font-size:9.6px;color:#262626;font-weight:normal;letter-spacing:0px;transform:scaleX(0.8625);transform-origin:right;">5%</div>
<div class="t" style="left:24.43px;top:208.00px;font-size:9.6px;color:#262626;font-weight:normal;letter-spacing:0px;transform:scaleX(0.8625);transform-origin:center;">5</div>
<div class="t" style="left:39.20px;top:208.00px;font-size:9.6px;color:#262626;font-weight:normal;letter-spacing:0px;transform:scaleX(0.8625);transform-origin:left;">VT10007</div>
<div class="t" style="left:83.40px;top:208.00px;font-size:9.6px;color:#262626;font-weight:normal;letter-spacing:0px;transform:scaleX(0.8625);transform-origin:left;">Đá mi bụi</div>
<div class="t" style="left:166.12px;top:208.00px;font-size:9.6px;color:#262626;font-weight:normal;letter-spacing:0px;transform:scaleX(0.8625);transform-origin:center;">Bột đá</div>
<div class="t" style="left:222.39px;top:208.00px;font-size:9.6px;color:#262626;font-weight:normal;letter-spacing:0px;transform:scaleX(0.8625);transform-origin:right;">49.951,39</div>
<div class="t" style="left:270.41px;top:208.00px;font-size:9.6px;color:#262626;font-weight:normal;letter-spacing:0px;transform:scaleX(0.8625);transform-origin:right;">5.036.227.924</div>
<div class="t" style="left:370.09px;top:208.00px;font-size:9.6px;color:#262626;font-weight:normal;letter-spacing:0px;transform:scaleX(0.8625);transform-origin:right;">10%</div>
<div class="t" style="left:24.43px;top:221.00px;font-size:9.6px;color:#262626;font-weight:normal;letter-spacing:0px;transform:scaleX(0.8625);transform-origin:center;">6</div>
<div class="t" style="left:39.20px;top:221.00px;font-size:9.6px;color:#262626;font-weight:normal;letter-spacing:0px;transform:scaleX(0.8625);transform-origin:left;">VT10008</div>
<div class="t" style="left:83.40px;top:221.00px;font-size:9.6px;color:#262626;font-weight:normal;letter-spacing:0px;transform:scaleX(0.8625);transform-origin:left;">Đá mi sàng</div>
<div class="t" style="left:166.12px;top:221.00px;font-size:9.6px;color:#262626;font-weight:normal;letter-spacing:0px;transform:scaleX(0.8625);transform-origin:center;">Bột đá</div>
<div class="t" style="left:227.73px;top:221.00px;font-size:9.6px;color:#262626;font-weight:normal;letter-spacing:0px;transform:scaleX(0.8625);transform-origin:right;">5.806,60</div>
<div class="t" style="left:278.41px;top:221.00px;font-size:9.6px;color:#262626;font-weight:normal;letter-spacing:0px;transform:scaleX(0.8625);transform-origin:right;">824.366.694</div>
<div class="t" style="left:370.09px;top:221.00px;font-size:9.6px;color:#262626;font-weight:normal;letter-spacing:0px;transform:scaleX(0.8625);transform-origin:right;">10%</div>
<div class="t" style="left:24.43px;top:234.00px;font-size:9.6px;color:#262626;font-weight:normal;letter-spacing:0px;transform:scaleX(0.8625);transform-origin:center;">7</div>
<div class="t" style="left:39.20px;top:234.00px;font-size:9.6px;color:#262626;font-weight:normal;letter-spacing:0px;transform:scaleX(0.8625);transform-origin:left;">VT10015</div>
<div class="t" style="left:83.40px;top:234.00px;font-size:9.6px;color:#262626;font-weight:normal;letter-spacing:0px;transform:scaleX(0.8625);transform-origin:left;">Đá vệ sinh</div>
<div class="t" style="left:173.86px;top:234.00px;font-size:9.6px;color:#262626;font-weight:normal;letter-spacing:0px;transform:scaleX(0.8625);transform-origin:center;">Đá</div>
<div class="t" style="left:227.73px;top:234.00px;font-size:9.6px;color:#262626;font-weight:normal;letter-spacing:0px;transform:scaleX(0.8625);transform-origin:right;">1.360,60</div>
<div class="t" style="left:283.75px;top:234.00px;font-size:9.6px;color:#262626;font-weight:normal;letter-spacing:0px;transform:scaleX(0.8625);transform-origin:right;">86.583.639</div>
<div class="t" style="left:375.43px;top:234.00px;font-size:9.6px;color:#262626;font-weight:normal;letter-spacing:0px;transform:scaleX(0.8625);transform-origin:right;">5%</div>
<div class="t" style="left:24.43px;top:248.00px;font-size:9.6px;color:#262626;font-weight:normal;letter-spacing:0px;transform:scaleX(0.8625);transform-origin:center;">8</div>
<div class="t" style="left:39.20px;top:248.00px;font-size:9.6px;color:#262626;font-weight:normal;letter-spacing:0px;transform:scaleX(0.8625);transform-origin:left;">VT10373</div>
<div class="t" style="left:83.40px;top:248.00px;font-size:9.6px;color:#262626;font-weight:normal;letter-spacing:0px;transform:scaleX(0.8625);transform-origin:left;">Đá 2x4</div>
<div class="t" style="left:173.86px;top:248.00px;font-size:9.6px;color:#262626;font-weight:normal;letter-spacing:0px;transform:scaleX(0.8625);transform-origin:center;">Đá</div>
<div class="t" style="left:241.08px;top:248.00px;font-size:9.6px;color:#262626;font-weight:normal;letter-spacing:0px;transform:scaleX(0.8625);transform-origin:right;">41,72</div>
<div class="t" style="left:289.09px;top:248.00px;font-size:9.6px;color:#262626;font-weight:normal;letter-spacing:0px;transform:scaleX(0.8625);transform-origin:right;">7.206.182</div>
<div class="t" style="left:375.43px;top:248.00px;font-size:9.6px;color:#262626;font-weight:normal;letter-spacing:0px;transform:scaleX(0.8625);transform-origin:right;">5%</div>
<div class="t" style="left:24.43px;top:261.00px;font-size:9.6px;color:#262626;font-weight:normal;letter-spacing:0px;transform:scaleX(0.8625);transform-origin:center;">9</div>
<div class="t" style="left:39.20px;top:261.00px;font-size:9.6px;color:#262626;font-weight:normal;letter-spacing:0px;transform:scaleX(0.8625);transform-origin:left;">VT10376</div>
<div class="t" style="left:83.40px;top:261.00px;font-size:9.6px;color:#262626;font-weight:normal;letter-spacing:0px;transform:scaleX(0.8625);transform-origin:left;">Đất san lấp</div>
<div class="t" style="left:172.53px;top:261.00px;font-size:9.6px;color:#262626;font-weight:normal;letter-spacing:0px;transform:scaleX(0.8625);transform-origin:center;">Đất</div>
<div class="t" style="left:222.39px;top:261.00px;font-size:9.6px;color:#262626;font-weight:normal;letter-spacing:0px;transform:scaleX(0.8625);transform-origin:right;">21.069,80</div>
<div class="t" style="left:278.41px;top:261.00px;font-size:9.6px;color:#262626;font-weight:normal;letter-spacing:0px;transform:scaleX(0.8625);transform-origin:right;">599.214.839</div>
<div class="t" style="left:375.43px;top:261.00px;font-size:9.6px;color:#262626;font-weight:normal;letter-spacing:0px;transform:scaleX(0.8625);transform-origin:right;">0%</div>
<div class="t" style="left:21.76px;top:274.00px;font-size:9.6px;color:#262626;font-weight:normal;letter-spacing:0px;transform:scaleX(0.8625);transform-origin:center;">10</div>
<div class="t" style="left:39.20px;top:274.00px;font-size:9.6px;color:#262626;font-weight:normal;letter-spacing:0px;transform:scaleX(0.8625);transform-origin:left;">VT10377</div>
<div class="t" style="left:83.40px;top:274.00px;font-size:9.6px;color:#262626;font-weight:normal;letter-spacing:0px;transform:scaleX(0.8625);transform-origin:left;">Đá 0x25</div>
<div class="t" style="left:166.12px;top:274.00px;font-size:9.6px;color:#262626;font-weight:normal;letter-spacing:0px;transform:scaleX(0.8625);transform-origin:center;">Bột đá</div>
<div class="t" style="left:241.79px;top:274.00px;font-size:9.6px;color:#262626;font-weight:normal;letter-spacing:0px;transform:scaleX(0.8625);transform-origin:right;">11,10</div>
<div class="t" style="left:289.09px;top:274.00px;font-size:9.6px;color:#262626;font-weight:normal;letter-spacing:0px;transform:scaleX(0.8625);transform-origin:right;">1.412.727</div>
<div class="t" style="left:370.09px;top:274.00px;font-size:9.6px;color:#262626;font-weight:normal;letter-spacing:0px;transform:scaleX(0.8625);transform-origin:right;">10%</div>
<div class="t" style="left:91.69px;top:315.00px;font-size:9.2px;color:#262626;font-weight:bold;letter-spacing:0px;transform:scaleX(0.9200);transform-origin:center;-webkit-text-stroke:0.05px currentColor;">LOẠI HÀNG</div>
<div class="t" style="left:153.68px;top:315.00px;font-size:9.2px;color:#262626;font-weight:bold;letter-spacing:0px;transform:scaleX(0.9200);transform-origin:center;-webkit-text-stroke:0.05px currentColor;">THUẾ SUẤT</div>
<div class="t" style="left:103.62px;top:327.00px;font-size:9.6px;color:#262626;font-weight:normal;letter-spacing:0px;transform:scaleX(0.8625);transform-origin:center;">Bột đá</div>
<div class="t" style="left:170.39px;top:327.00px;font-size:9.6px;color:#262626;font-weight:normal;letter-spacing:0px;transform:scaleX(0.8625);transform-origin:center;">10%</div>
<div class="t" style="left:110.03px;top:341.00px;font-size:9.6px;color:#262626;font-weight:normal;letter-spacing:0px;transform:scaleX(0.8625);transform-origin:center;">Đất</div>
<div class="t" style="left:173.06px;top:341.00px;font-size:9.6px;color:#262626;font-weight:normal;letter-spacing:0px;transform:scaleX(0.8625);transform-origin:center;">0%</div>
<div class="t" style="left:111.36px;top:354.00px;font-size:9.6px;color:#262626;font-weight:normal;letter-spacing:0px;transform:scaleX(0.8625);transform-origin:center;">Đá</div>
<div class="t" style="left:173.06px;top:354.00px;font-size:9.6px;color:#262626;font-weight:normal;letter-spacing:0px;transform:scaleX(0.8625);transform-origin:center;">5%</div>
<div class="a" style="left:81.0px;top:311.54px;width:126.39999999999999px;height:41.209999999999944px;border:1.4px solid #b5504f"></div>
<div class="a" style="left:80.0px;top:310.54px;width:3.4px;height:3.4px;background:#b5504f"></div>
<div class="a" style="left:205.0px;top:310.54px;width:3.4px;height:3.4px;background:#b5504f"></div>
<div class="a" style="left:80.0px;top:350.34999999999997px;width:3.4px;height:3.4px;background:#b5504f"></div>
<div class="a" style="left:205.0px;top:350.34999999999997px;width:3.4px;height:3.4px;background:#b5504f"></div>
<div class="a" style="left:152.60000000000002px;top:152.3px;width:54.799999999999976px;height:14.67px;border:1.4px solid #5479b3"></div>
<div class="a" style="left:151.60000000000002px;top:151.3px;width:3.4px;height:3.4px;background:#5479b3"></div>
<div class="a" style="left:205.0px;top:151.3px;width:3.4px;height:3.4px;background:#5479b3"></div>
<div class="a" style="left:151.60000000000002px;top:164.57000000000002px;width:3.4px;height:3.4px;background:#5479b3"></div>
<div class="a" style="left:205.0px;top:164.57000000000002px;width:3.4px;height:3.4px;background:#5479b3"></div>
<div class="a" style="left:334.7px;top:153.6px;width:156px;height:12.2px;background:#fff"></div>
<div class="a" style="left:333.4px;top:152.2px;width:59.40000000000002px;height:14.87px;border:1.6px solid #217346;border-right:none"></div>
<div class="a" style="left:334.2px;top:152.2px;width:57.5px;height:1px;background:#3f5a33"></div>
<div class="t" style="left:336.00px;top:156.00px;font-size:9.2px;color:#262626;font-weight:normal;letter-spacing:0px;transform:scaleX(0.9039);transform-origin:left;">=VLOOKUP(<span style="color:#4a7bb8">D2</span>;<span style="color:#b5504f">$C$14:$D$16</span>;2;FALSE)</div>
<div class="a" style="left:396.6px;top:153.8px;width:0.9px;height:12px;background:#777"></div>
<div class="a" style="left:340.5px;top:167.5px;width:253px;height:11.8px;background:#fff;border:1px solid #c2c2c2;box-shadow:1.5px 1.5px 1px rgba(0,0,0,0.12)"></div>
<div class="t" style="left:344.00px;top:170.00px;font-size:8px;color:#6a6a6a;font-weight:normal;letter-spacing:0px;transform:scaleX(0.9590);transform-origin:left;">VLOOKUP(lookup_value;</div>
<div class="t" style="left:432.70px;top:170.00px;font-size:8px;color:#444;font-weight:bold;letter-spacing:0px;transform:scaleX(0.8806);transform-origin:left;">table_array</div>
<div class="t" style="left:470.50px;top:170.00px;font-size:8px;color:#6a6a6a;font-weight:normal;letter-spacing:0px;">; col_index_num; [range_lookup])</div>
</div></body></html>
